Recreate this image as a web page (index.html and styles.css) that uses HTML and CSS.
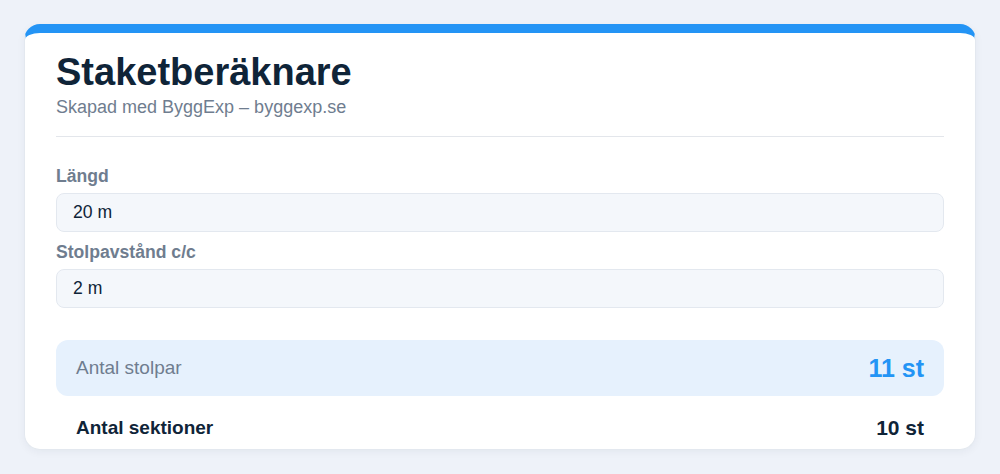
FILE: index.html
```html
<!DOCTYPE html>
<html lang="sv">
<head>
<meta charset="utf-8">
<title>Staketberäknare</title>
<link rel="stylesheet" href="styles.css">
</head>
<body>
<main class="card">
  <header class="card-header">
    <h1 class="title">Staketberäknare</h1>
    <p class="subtitle">Skapad med ByggExp – byggexp.se</p>
  </header>
  <section class="form">
    <div class="field">
      <label class="label" for="len">Längd</label>
      <div class="input" id="len">20 m</div>
    </div>
    <div class="field">
      <label class="label" for="cc">Stolpavstånd c/c</label>
      <div class="input" id="cc">2 m</div>
    </div>
  </section>
  <section class="results">
    <div class="row row-primary">
      <span class="row-label">Antal stolpar</span>
      <span class="row-value">11 st</span>
    </div>
    <div class="row row-secondary">
      <span class="row-label">Antal sektioner</span>
      <span class="row-value">10 st</span>
    </div>
  </section>
</main>
</body>
</html>
```

FILE: styles.css
```css
* { box-sizing: border-box; }

html, body {
  margin: 0;
  height: 100%;
}

body {
  padding: 24px;
  background: #eef2f9;
  font-family: "Liberation Sans", Arial, Helvetica, sans-serif;
  color: #0f2438;
}

.card {
  height: calc(100vh - 48px);
  overflow: hidden;
  background: #ffffff;
  border: 1px solid #e3e8ef;
  border-top: 9px solid #2394f5;
  border-radius: 16px;
  box-shadow: 0 2px 8px rgba(15, 36, 56, 0.05);
  padding: 17px 31px 0;
}

.card-header {
  padding-bottom: 18px;
  border-bottom: 1px solid #e3e6eb;
}

.title {
  margin: 0;
  font-size: 38px;
  line-height: 44px;
  font-weight: 700;
  color: #0f2438;
}

.subtitle {
  margin: 2px 0 0;
  font-size: 18px;
  line-height: 22px;
  color: #6f7d8f;
}

.form {
  padding-top: 29px;
  display: flex;
  flex-direction: column;
  gap: 10px;
}

.field {
  display: flex;
  flex-direction: column;
  gap: 6px;
}

.label {
  font-size: 17.6px;
  line-height: 21px;
  font-weight: 700;
  color: #6f7d8f;
}

.input {
  height: 39px;
  padding: 8px 16px;
  background: #f4f7fb;
  border: 1px solid #e3e8ef;
  border-radius: 8px;
  font-size: 17.6px;
  line-height: 21px;
  color: #0f2438;
}

.results {
  margin-top: 32px;
}

.row {
  display: flex;
  justify-content: space-between;
  align-items: center;
  padding: 0 20px;
}

.row-primary {
  height: 56px;
  background: #e6f1fd;
  border-radius: 12px;
}

.row-primary .row-label {
  font-size: 19px;
  line-height: 22px;
  color: #6f7d8f;
}

.row-primary .row-value {
  font-size: 25px;
  line-height: 29px;
  font-weight: 700;
  color: #2394f5;
}

.row-secondary {
  padding: 20px 20px;
}

.row-secondary .row-label {
  font-size: 19px;
  line-height: 22px;
  font-weight: 700;
  color: #0f2438;
}

.row-secondary .row-value {
  font-size: 21px;
  line-height: 24px;
  font-weight: 700;
  color: #0f2438;
}
```
